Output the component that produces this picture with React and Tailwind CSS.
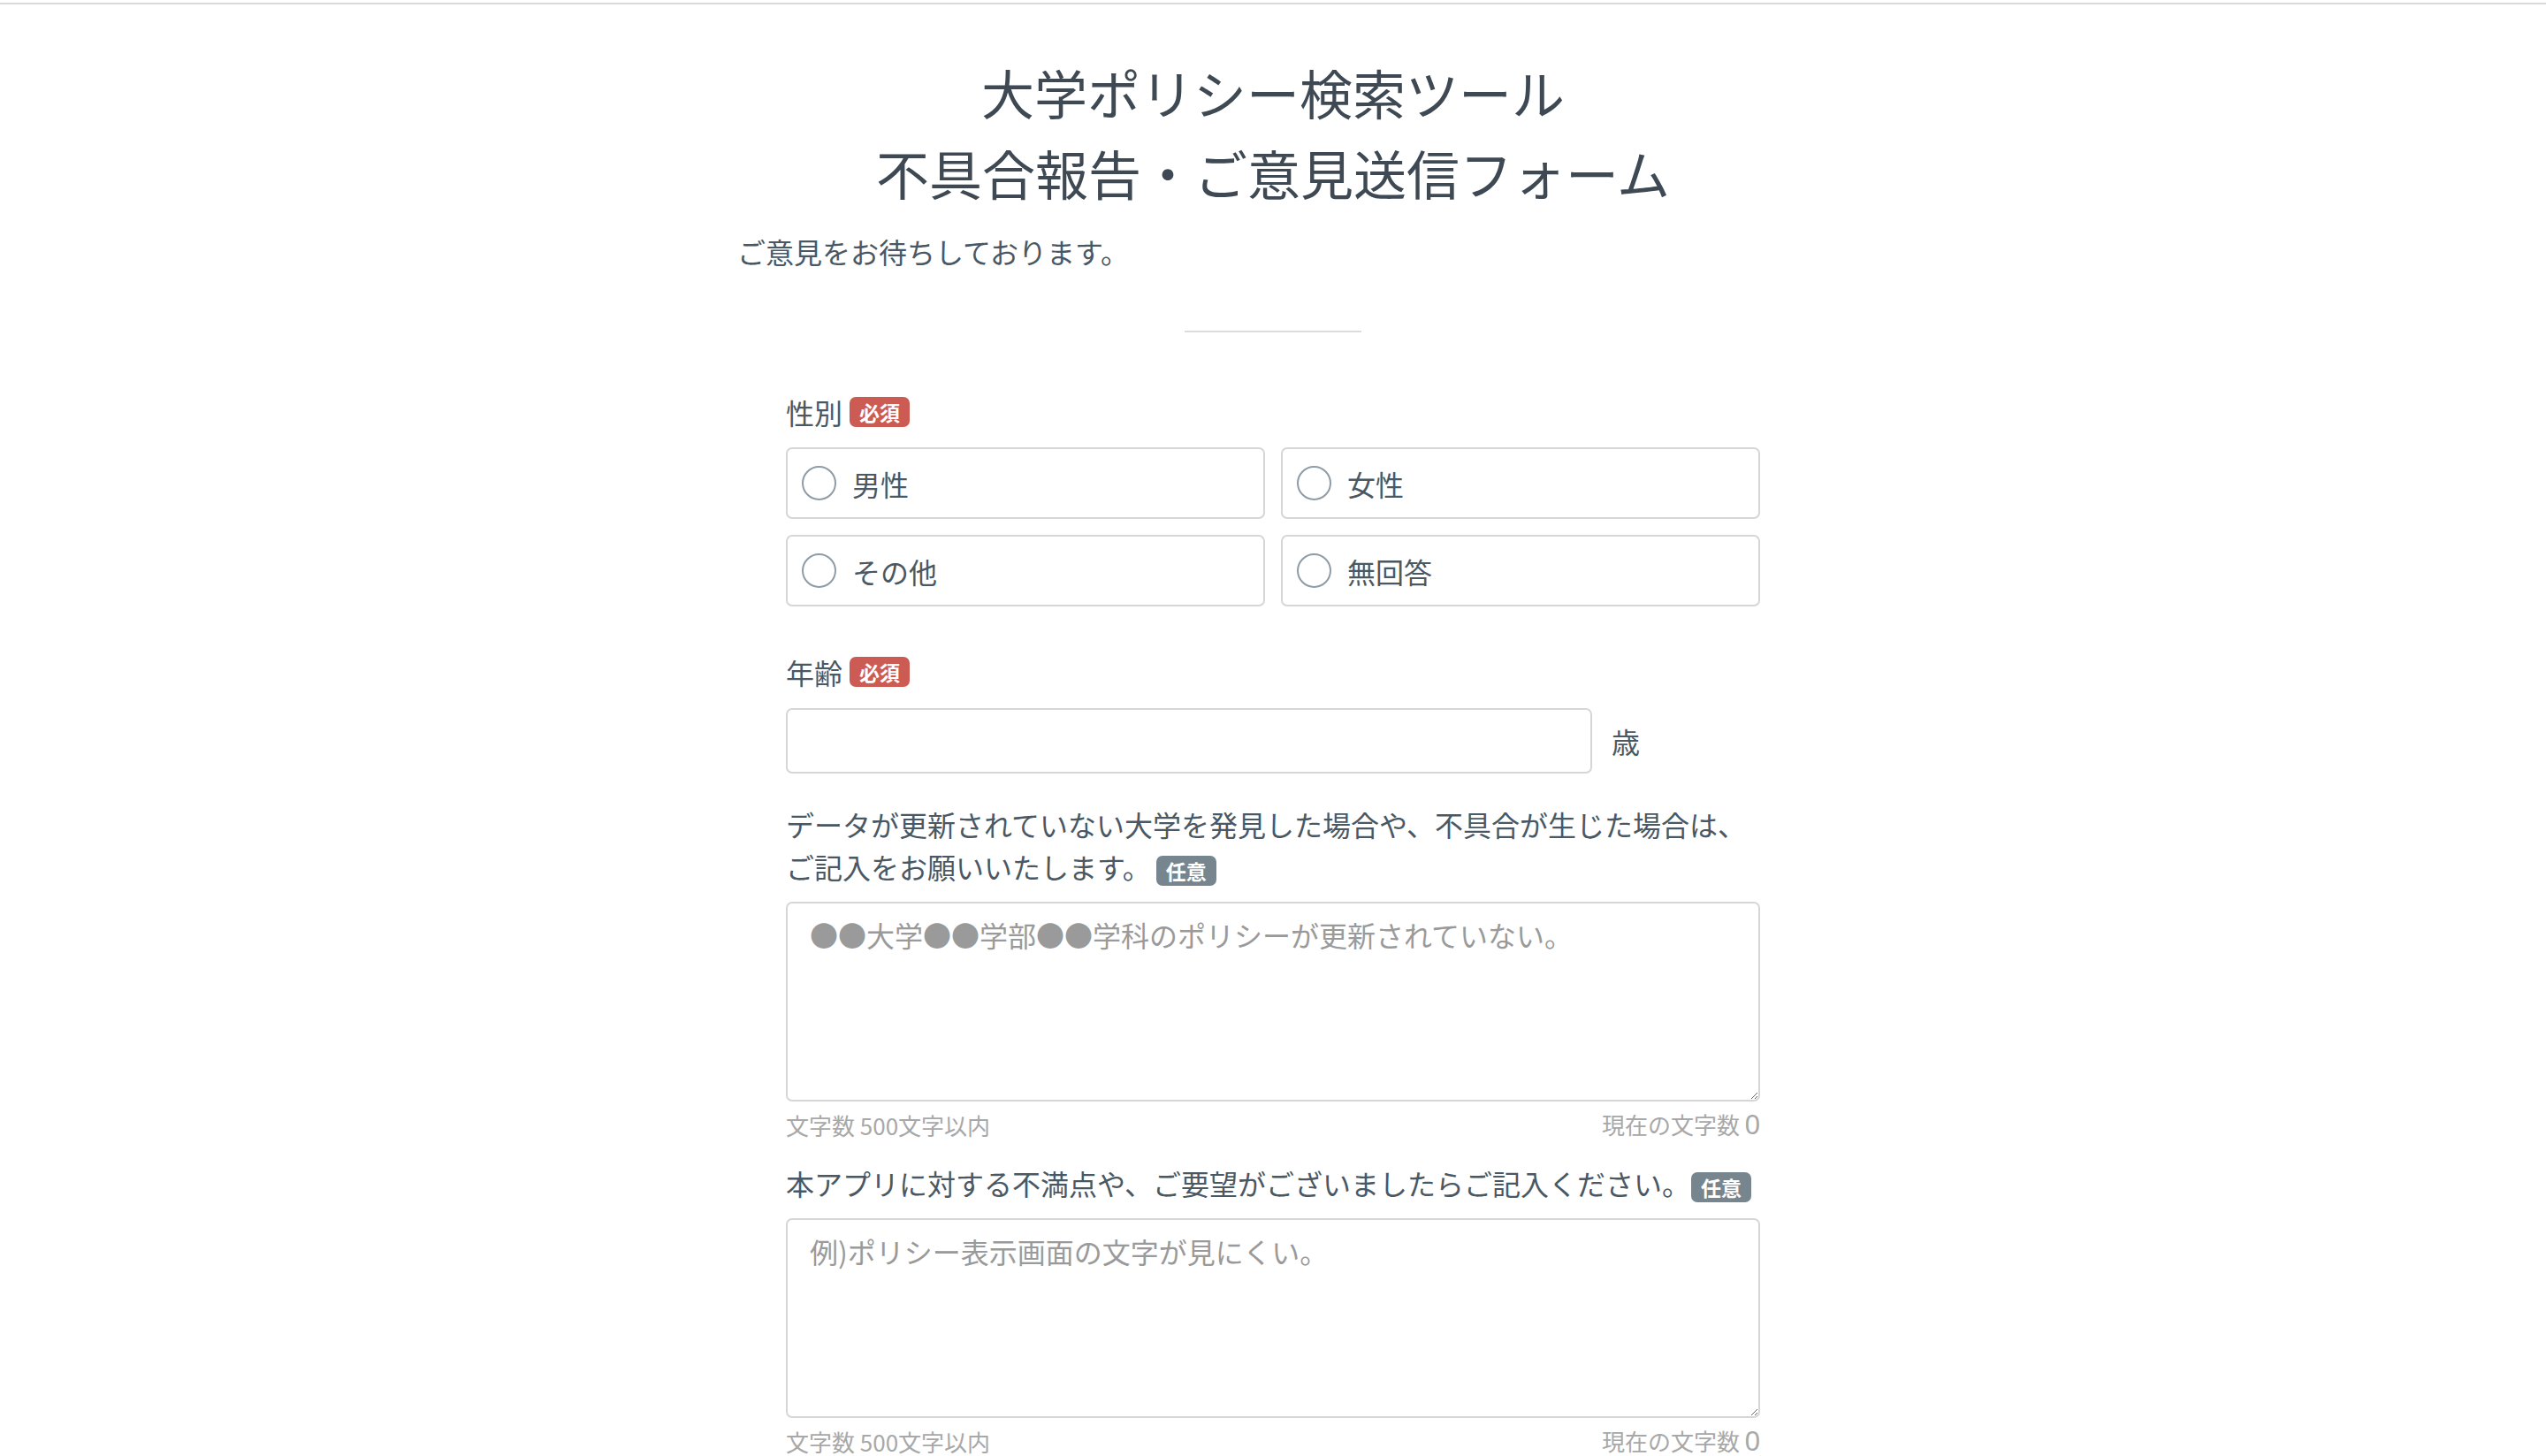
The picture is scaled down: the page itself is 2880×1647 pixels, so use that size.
import { useState } from "react";

function Badge({ kind, className = "" }) {
  const color = kind === "required" ? "bg-[#cc5b53]" : "bg-[#77858f]";
  return (
    <span
      className={`inline-flex h-[34px] items-center rounded-[7px] px-[11px] align-middle text-[23px] font-bold leading-[34px] text-white ${color} ${className}`}
    >
      {kind === "required" ? "必須" : "任意"}
    </span>
  );
}

function RadioBox({ label, checked, onClick }) {
  return (
    <label
      onClick={onClick}
      className="flex h-[81px] cursor-pointer items-center gap-[18px] rounded-[7px] border-2 border-[#d6d6d6] pl-[16px]"
    >
      <span className="flex h-[39px] w-[39px] items-center justify-center rounded-full border-2 border-[#8d9ca7]">
        {checked && <span className="h-[19px] w-[19px] rounded-full bg-[#4a5864]" />}
      </span>
      <span className="text-[32px] leading-[48px]">{label}</span>
    </label>
  );
}

function CountRow({ count }) {
  return (
    <div className="mt-[9px] flex items-end justify-between text-[26px] leading-[34px] text-[#a8a8a8]">
      <span>文字数 500文字以内</span>
      <span>
        現在の文字数 <span className="font-['Liberation_Sans',sans-serif] text-[31px] leading-[34px]">{count}</span>
      </span>
    </div>
  );
}

export default function App() {
  const [gender, setGender] = useState("");
  const [bug, setBug] = useState("");
  const [wish, setWish] = useState("");

  return (
    <div className="min-h-screen bg-white pt-[3px] font-['Noto_Sans_CJK_JP',sans-serif] text-[#4a5864]">
      <div className="h-[2px] bg-[#dadada]" />

      <div className="mx-auto w-[1212px] pt-[53px]">
        <h1 className="text-center text-[60px] leading-[91px] font-normal text-[#3e4953]">
          大学ポリシー検索ツール
          <br />
          不具合報告・ご意見送信フォーム
        </h1>
        <p className="mt-[19px] text-[32px] leading-[50px]">ご意見をお待ちしております。</p>
        <div className="mx-auto mt-[65px] h-[2px] w-[200px] bg-[#dcdcdc]" />

        <form className="mx-auto mt-[65px] w-[1102px]" onSubmit={(e) => e.preventDefault()}>
          {/* 性別 */}
          <div className="flex items-center gap-[8px] text-[32px] leading-[50px]">
            <span>性別</span>
            <Badge kind="required" />
          </div>
          <div className="mt-[15px] grid grid-cols-2 gap-[18px]">
            {["男性", "女性", "その他", "無回答"].map((g) => (
              <RadioBox key={g} label={g} checked={gender === g} onClick={() => setGender(g)} />
            ))}
          </div>

          {/* 年齢 */}
          <div className="mt-[49px] flex items-center gap-[8px] text-[32px] leading-[50px]">
            <span>年齢</span>
            <Badge kind="required" />
          </div>
          <div className="mt-[16px] flex items-center gap-[22px]">
            <input
              type="text"
              className="h-[74px] w-[912px] rounded-[7px] border-2 border-[#d6d6d6] px-[24px] text-[32px] outline-none"
            />
            <span className="text-[32px]">歳</span>
          </div>

          {/* 不具合 */}
          <p className="mt-[33px] text-[32px] leading-[48px]">
            データが更新されていない大学を発見した場合や、不具合が生じた場合は、
            <br />
            ご記入をお願いいたします。
            <Badge kind="optional" className="ml-[6px]" />
          </p>
          <textarea
            value={bug}
            onChange={(e) => setBug(e.target.value)}
            placeholder="●●大学●●学部●●学科のポリシーが更新されていない。"
            className="mt-[16px] block h-[226px] w-full rounded-[7px] border-2 border-[#d6d6d6] px-[25px] pt-[15px] text-[32px] leading-[40px] outline-none placeholder:text-[#9a9a9a]"
          />
          <CountRow count={bug.length} />

          {/* 要望 */}
          <p className="mt-[24px] text-[32px] leading-[48px]">
            本アプリに対する不満点や、ご要望がございましたらご記入ください。
            <Badge kind="optional" className="ml-[1px]" />
          </p>
          <textarea
            value={wish}
            onChange={(e) => setWish(e.target.value)}
            placeholder="例)ポリシー表示画面の文字が見にくい。"
            className="mt-[16px] block h-[226px] w-full rounded-[7px] border-2 border-[#d6d6d6] px-[25px] pt-[15px] text-[32px] leading-[40px] outline-none placeholder:text-[#9a9a9a]"
          />
          <CountRow count={wish.length} />
        </form>
      </div>
    </div>
  );
}
